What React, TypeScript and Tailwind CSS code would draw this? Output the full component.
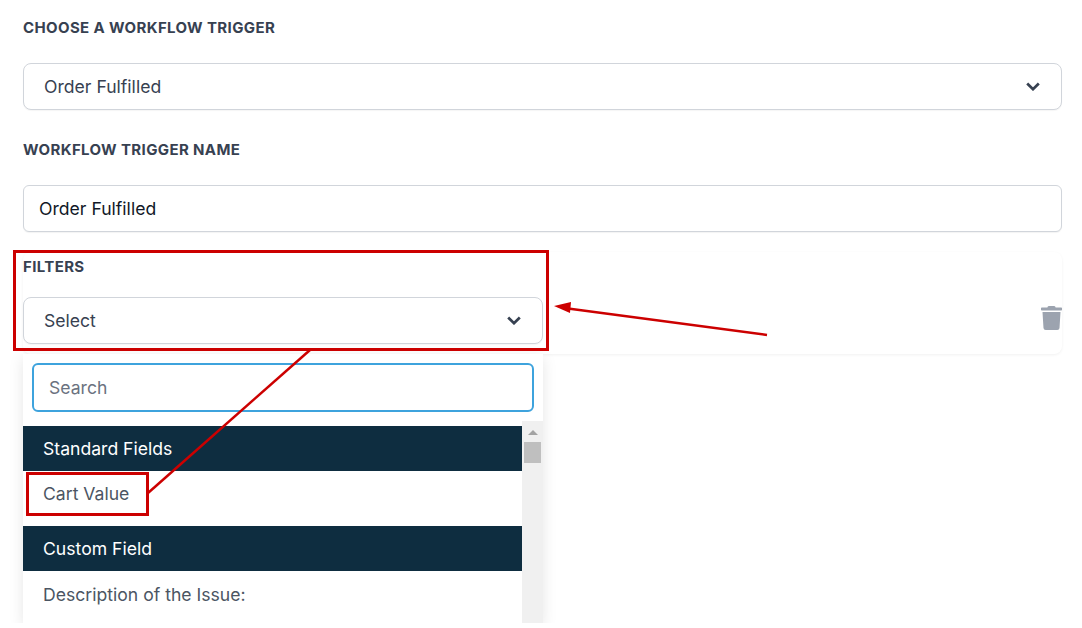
import { FaTrash } from 'react-icons/fa';

function Chevron() {
  return (
    <svg width="14" height="9" viewBox="0 0 14 9" fill="none" className="shrink-0">
      <path d="M1.2 1.5 7 7.200l5.800-5.700" stroke="#374151" strokeWidth="2.7" />
    </svg>
  );
}

function SelectBox({ label }: { label: string }) {
  return (
    <div className="h-[47px] flex items-center justify-between pl-5 pr-[21px] bg-white border border-[#d1d5db] rounded-lg shadow-[0_1px_1px_rgba(0,0,0,0.04)] text-[17.6px] text-[#374151]">
      <span className="pt-0.5">{label}</span>
      <Chevron />
    </div>
  );
}

function Label({ children }: { children: string }) {
  return <p className="h-5 leading-5 text-[15px] font-bold tracking-[0.375px] uppercase text-[#374151]">{children}</p>;
}

function GroupHeader({ children }: { children: string }) {
  return <div className="h-[45px] flex items-center px-5 pt-0.5 bg-[#0e2d40] text-[17.6px] text-white">{children}</div>;
}

function Annotations() {
  return (
    <svg width="1082" height="628" viewBox="0 0 1082 628" fill="none" className="absolute left-0 top-0 pointer-events-none">
      <rect x="14.5" y="251.5" width="533" height="98" stroke="#cc0000" strokeWidth="3" />
      <rect x="27.500" y="473.5" width="120" height="41" stroke="#cc0000" strokeWidth="3" />
      <path d="M310 350 148 493" stroke="#cc0000" strokeWidth="2.500" />
      <path d="M767 335 568 308.500" stroke="#cc0000" strokeWidth="2.500" />
      <path d="M554 306 571 302 570 313z" fill="#cc0000" />
    </svg>
  );
}

export default function App() {
  return (
    <div className="w-[1082px] h-[628px] bg-white font-['Inter',sans-serif]">
      <div className="relative h-[623px] overflow-hidden">
        <div className="pl-[23px] pr-5 pt-[18px]">
          <Label>Choose a workflow trigger</Label>
          <div className="mt-[25px]">
            <SelectBox label="Order Fulfilled" />
          </div>

          <div className="mt-[30px]">
            <Label>Workflow trigger name</Label>
          </div>
          <div className="mt-[25px] h-[47px] flex items-center px-[15px] pt-0.5 bg-white border border-[#d1d5db] rounded-md shadow-[0_1px_1px_rgba(0,0,0,0.05)] text-[17.6px] text-[#111827]">
            Order Fulfilled
          </div>

          {/* フィルター行 */}
          <div className="relative mt-5 h-[102px] pt-[5px] flex items-start justify-between rounded-lg shadow-[0_1px_3px_rgba(0,0,0,0.06)]">
            <div className="w-[520px]">
              <Label>Filters</Label>
              <div className="mt-[20px]">
                <SelectBox label="Select" />
              </div>
            </div>
            <FaTrash className="w-[21px] h-6 mt-[49px] text-[#9ca3af]" />

            {/* ドロップダウン */}
            <div className="absolute left-0 top-[102px] w-[520px] h-[269px] bg-white shadow-[0_4px_14px_rgba(0,0,0,0.1)]">
              <div className="px-[9px] pt-[9px]">
                <div className="h-[49px] flex items-center pl-[15px] pt-0.5 border-2 border-[#3ea3dd] rounded-md text-[17.6px] text-[#6b7280]">
                  Search
                </div>
              </div>
              <div className="relative mt-[9px] h-[202px] flex">
                <div className="flex-1 pt-[5px]">
                  <GroupHeader>Standard Fields</GroupHeader>
                  <div className="h-[55px] pt-[11px] px-5 leading-[24px] text-[17.6px] text-[#4b5563]">Cart Value</div>
                  <GroupHeader>Custom Field</GroupHeader>
                  <div className="h-[46px] flex items-center px-5 pt-0.5 text-[17.6px] text-[#4b5563]">Description of the Issue:</div>
                </div>
                {/* スクロールバー */}
                <div className="w-[21px] bg-[#f0f0f0] flex flex-col items-center pt-[9px]">
                  <div className="w-0 h-0 border-x-[5px] border-x-transparent border-b-[5px] border-b-[#a3a3a3]" />
                  <div className="mt-[7px] w-[17px] h-[21px] bg-[#bfbfbf]" />
                </div>
              </div>
            </div>
          </div>
        </div>
        <Annotations />
      </div>
    </div>
  );
}
